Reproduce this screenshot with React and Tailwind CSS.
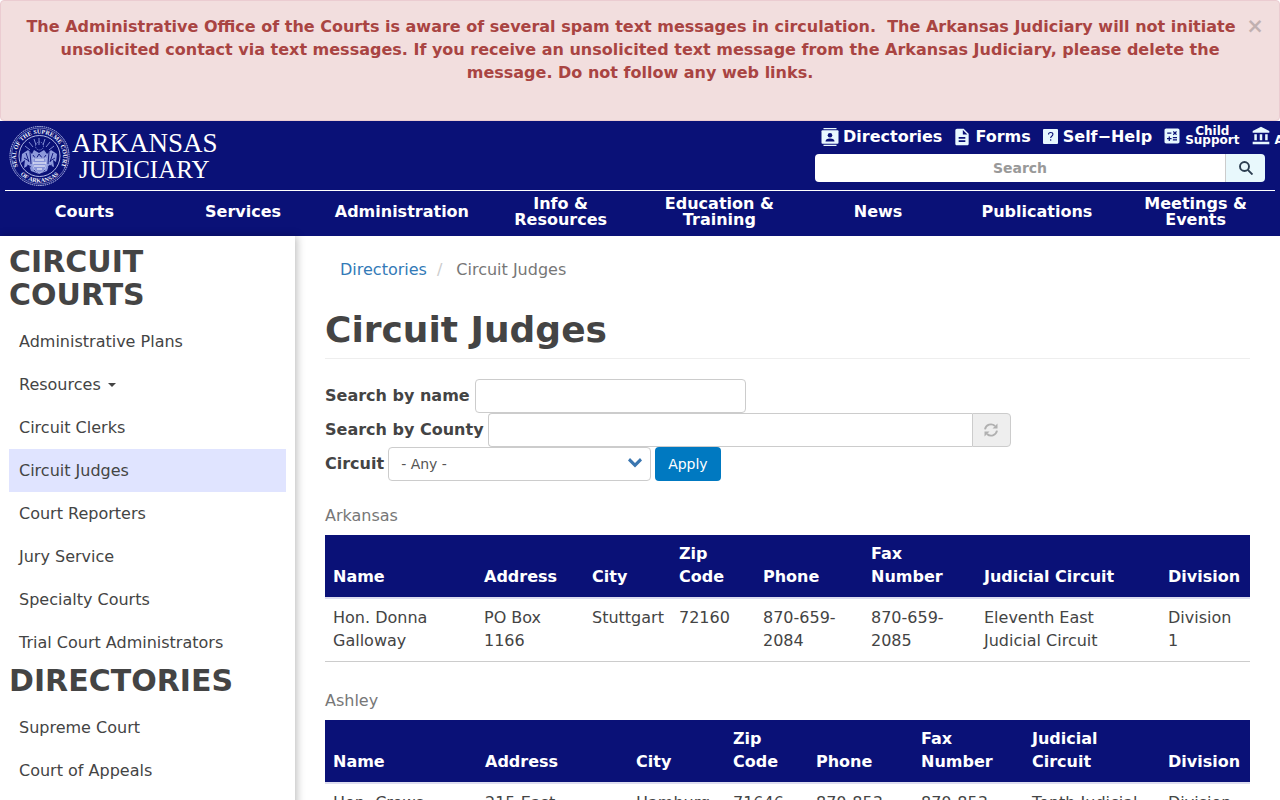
import React, { useState } from "react";
import { MdAccountBalance, MdCalculate, MdDescription } from "react-icons/md";

const mainMenu = [
  "Courts",
  "Services",
  "Administration",
  "Info & Resources",
  "Education & Training",
  "News",
  "Publications",
  "Meetings & Events",
];

const courtLinks = [
  "Administrative Plans",
  "Resources",
  "Circuit Clerks",
  "Circuit Judges",
  "Court Reporters",
  "Jury Service",
  "Specialty Courts",
  "Trial Court Administrators",
];

const directoryLinks = ["Supreme Court", "Court of Appeals"];

const columns = [
  "Name",
  "Address",
  "City",
  "Zip Code",
  "Phone",
  "Fax Number",
  "Judicial Circuit",
  "Division",
];

const counties = [
  {
    name: "Arkansas",
    widths: [
      "w-[151px]",
      "w-[108px]",
      "w-[87px]",
      "w-[84px]",
      "w-[108px]",
      "w-[113px]",
      "w-[184px]",
      "w-[90px]",
    ],
    judges: [
      [
        "Hon. Donna Galloway",
        "PO Box 1166",
        "Stuttgart",
        "72160",
        "870-659-2084",
        "870-659-2085",
        "Eleventh East Judicial Circuit",
        "Division 1",
      ],
    ],
  },
  {
    name: "Ashley",
    widths: [
      "w-[152px]",
      "w-[151px]",
      "w-[97px]",
      "w-[83px]",
      "w-[105px]",
      "w-[111px]",
      "w-[136px]",
      "w-[90px]",
    ],
    judges: [
      [
        "Hon. Crews Puryear",
        "215 East Jefferson",
        "Hamburg",
        "71646",
        "870-853-2030",
        "870-853-2033",
        "Tenth Judicial Circuit",
        "Division 1",
      ],
    ],
  },
];

const Alert = ({ onClose }) => (
  <div
    role="alert"
    className="min-h-[121px] rounded border border-[#ebccd1] bg-[#f2dede] px-[15px] pt-3.5 text-center font-bold leading-[23px] text-[#a94442]"
  >
    <button
      onClick={onClose}
      aria-label="Close"
      className="float-right w-[18px] text-[21px] leading-[23px] text-black opacity-20"
    >
      ×
    </button>
    The Administrative Office of the Courts is aware of several spam text
    messages in circulation.&nbsp; The Arkansas Judiciary will not initiate
    unsolicited contact via text messages. If you receive an unsolicited text
    message from the Arkansas Judiciary, please delete the message. Do not
    follow any web links.
  </div>
);

const Logo = () => (
  <svg
    width="210"
    height="64"
    viewBox="0 0 210 64"
    role="img"
    aria-label="Arkansas Judiciary"
  >
    <defs>
      <path id="sealTop" d="M9.200 42A23.500 23.500 0 1 1 51.800 42" />
      <path id="sealBottom" d="M11 49A26.500 26.500 0 0 0 50 49" />
    </defs>
    <g fill="none" stroke="#c3cbf2">
      <circle cx="30.500" cy="31" r="29.500" strokeDasharray="1.500 0.700" />
      <circle cx="30.500" cy="31" r="28" strokeWidth="0.500" />
      <circle cx="30.500" cy="31" r="20.500" strokeWidth="0.900" />
    </g>
    <g fill="#f4f6ff" fontFamily="Liberation Serif, serif" fontWeight="700">
      <text fontSize="6">
        <textPath href="#sealTop" startOffset="50%" textAnchor="middle">
          SEAL OF THE SUPREME COURT
        </textPath>
      </text>
      <text fontSize="6">
        <textPath href="#sealBottom" startOffset="50%" textAnchor="middle">
          OF ARKANSAS
        </textPath>
      </text>
    </g>
    {/* rays and stars over the shield */}
    <g stroke="#8f9ade" strokeWidth="0.900" fill="none">
      <path d="M30 13v7M25 14l2 6M36 14l-2 6M20 17l4 5M41 17l-4 5M16 21l5 4M45 21l-5 4" />
      <circle cx="30.500" cy="21" r="4" strokeDasharray="1 1" />
    </g>
    <path
      d="M13 29l6-4 4 4 2-4 5 3 5-3 3 4 4-4 6 4-1 8-3-2 1 7-5-2-2 6-8 3-8-3-2-6-5 3 1-8-4 3z"
      fill="#8d99db"
    />
    <path
      d="M17 28l3 9M21 27l1 12M40 27l-1 12M44 28l-3 9M24 30l3 4 3-5 4 5 3-4M15 33l5 3M46 33l-5 3M25 45l5 3 6-3M18 40l4 2M43 40l-4 2"
      stroke="#0a1177"
      strokeWidth="0.900"
      fill="none"
    />
    <path
      d="M24 33h13v8q-1 5-6.500 7q-5.500-2-6.500-7z"
      fill="#8793d8"
      stroke="#c9d0f4"
      strokeWidth="0.700"
    />
    <path
      d="M26 35h9M24 38h13M25 41h11M28 44h5"
      stroke="#fff"
      strokeWidth="1.100"
    />
    <g fill="#fff" fontFamily="Liberation Serif, serif" fontWeight="400">
      <text x="63" y="27" fontSize="27">
        ARKANSAS
      </text>
      <text x="70" y="53" fontSize="25">
        JUDICIARY
      </text>
    </g>
  </svg>
);

const DirectoryIcon = () => (
  <svg width="18" height="18" viewBox="0 0 18 18" aria-hidden="true">
    <path d="M2.500 0h13v1.300h-13zM2.500 16.700h13V18h-13z" fill="#e8f8ff" />
    <rect x="0.500" y="2.300" width="17" height="13.400" rx="1" fill="#e8f8ff" />
    <circle cx="9" cy="7.300" r="2.300" fill="#0a1177" />
    <path d="M4.500 13.500q0-3 4.500-3t4.500 3z" fill="#0a1177" />
  </svg>
);

const HelpIcon = () => (
  <svg width="15" height="15" viewBox="0 0 15 15" aria-hidden="true">
    <rect width="15" height="15" rx="1" fill="#e8f8ff" />
    <path
      d="M5.500 5.500q0-2 2.200-2t2.200 1.800q0 1-1.200 1.900t-1 1.800M7.700 10.300v1.400"
      fill="none"
      stroke="#0a1177"
      strokeWidth="1.100"
    />
  </svg>
);

const SearchIcon = () => (
  <svg
    width="14"
    height="14"
    viewBox="0 0 14 14"
    fill="none"
    stroke="currentColor"
    strokeWidth="1.900"
    aria-hidden="true"
  >
    <circle cx="5.500" cy="5.500" r="4.500" />
    <path d="M8.800 8.800l4.700 4.700" />
  </svg>
);

const RefreshIcon = () => (
  <svg
    width="14"
    height="14"
    viewBox="0 0 14 14"
    fill="none"
    stroke="#b0b0b0"
    strokeWidth="1.900"
    aria-hidden="true"
  >
    <path d="M1 6.300A6 6 0 0 1 11 3M13 7.700A6 6 0 0 1 3 11" />
    <path d="M13.500 0.500v5h-5zM0.500 13.500v-5h5z" fill="#b0b0b0" stroke="none" />
  </svg>
);

const Header = () => (
  <header className="overflow-hidden bg-[#0a1177] px-[5px] font-bold text-white">
    <div className="flex h-[70px] items-start justify-between border-b border-white">
      <a href="#home" className="ml-1 mt-1 shrink-0">
        <Logo />
      </a>
      <div className="w-[460px] shrink-0 pr-2.5">
        <nav className="flex h-[31px] items-center whitespace-nowrap pl-1.5">
          <a href="#directories" className="mr-2.5 flex items-center gap-1">
            <DirectoryIcon />
            Directories
          </a>
          <a href="#forms" className="mr-3 flex items-center gap-[3px]">
            <MdDescription className="size-5 text-[#e8f8ff]" />
            Forms
          </a>
          <a href="#self-help" className="mr-2.5 flex items-center gap-[5px]">
            <HelpIcon />
            Self−Help
          </a>
          <a
            href="#child-support"
            className="mr-3 flex items-center gap-[3px]"
          >
            <MdCalculate className="mb-0.5 size-5 text-[#e8f8ff]" />
            <span className="pb-0.5 text-center text-xs leading-[9px]">
              Child
              <br />
              Support
            </span>
          </a>
          <a href="#aoc" className="flex items-center gap-[3px]">
            <MdAccountBalance className="mb-0.5 size-5 text-[#e8f8ff]" />
            <span className="pt-2 text-xs leading-[9px]">AOC</span>
          </a>
        </nav>
        <form className="mt-0.5 flex h-7" onSubmit={(e) => e.preventDefault()}>
          <input
            type="text"
            aria-label="Search"
            placeholder="Search"
            className="min-w-0 grow rounded-l bg-white px-3 text-center text-sm text-[#444] placeholder:text-[#999]"
          />
          <button
            aria-label="Submit search"
            className="flex w-10 items-center justify-center rounded-r border-l border-[#ccc] bg-[#e8f8fc] text-[#2c3e50]"
          >
            <SearchIcon />
          </button>
        </form>
      </div>
    </div>
    <nav className="grid h-[45px] grid-cols-8 items-center pb-1 text-center leading-4">
      {mainMenu.map((item) => (
        <a key={item} href="#menu" className="px-3">
          {item}
        </a>
      ))}
    </nav>
  </header>
);

const SideMenu = ({ title, links }) => (
  <>
    <h2 className="text-3xl font-bold leading-[33px]">{title}</h2>
    <ul className="pt-[9px]">
      {links.map((link) => (
        <li key={link}>
          <a
            href="#page"
            className={`flex h-[43px] items-center px-2.5 ${
              link === "Circuit Judges" ? "bg-[#e0e4ff]" : ""
            }`}
          >
            {link}
            {link === "Resources" && (
              <span className="ml-[7px] border-x-4 border-t-4 border-x-transparent border-t-[#444]" />
            )}
          </a>
        </li>
      ))}
    </ul>
  </>
);

const CountyTable = ({ county }) => (
  <table className="mb-[19px] w-full table-fixed border-collapse text-left">
    <caption className="py-2 text-left text-[#777]">{county.name}</caption>
    <colgroup>
      {county.widths.map((width, index) => (
        <col key={index} className={width} />
      ))}
    </colgroup>
    <thead className="bg-[#0a1177] text-white">
      <tr>
        {columns.map((column) => (
          <th
            key={column}
            className="border-b-2 border-[#ddddef] px-2 pb-[9px] pt-[7px] align-bottom"
          >
            {column}
          </th>
        ))}
      </tr>
    </thead>
    <tbody>
      {county.judges.map((judge) => (
        <tr key={judge[0]}>
          {judge.map((value, index) => (
            <td
              key={index}
              className="border-b border-[#ccc] px-2 pb-[9px] pt-[7px] align-top"
            >
              {value}
            </td>
          ))}
        </tr>
      ))}
    </tbody>
  </table>
);

const SearchForm = () => (
  <form onSubmit={(e) => e.preventDefault()}>
    <div className="flex items-center gap-[5px]">
      <label htmlFor="name" className="pb-0.5 font-bold">
        Search by name
      </label>
      <input
        id="name"
        type="text"
        className="h-[34px] w-[271px] rounded border border-[#ccc] px-3 text-sm"
      />
    </div>
    <div className="flex items-center gap-1">
      <label htmlFor="county" className="pb-0.5 font-bold">
        Search by County
      </label>
      <div className="flex">
        <input
          id="county"
          type="text"
          className="h-[34px] w-[484px] rounded-l border border-r-0 border-[#ccc] px-3 text-sm"
        />
        <span className="flex w-[39px] items-center justify-center rounded-r border border-[#ccc] bg-[#eee]">
          <RefreshIcon />
        </span>
      </div>
    </div>
    <div className="flex items-center gap-1">
      <label htmlFor="circuit" className="pb-0.5 font-bold">
        Circuit
      </label>
      <div className="relative">
        <select
          id="circuit"
          className="h-[34px] w-[263px] appearance-none rounded border border-[#ccc] bg-white px-3 text-sm text-[#555]"
        >
          <option>- Any -</option>
          <option>Tenth Judicial Circuit</option>
          <option>Eleventh East Judicial Circuit</option>
        </select>
        <svg
          width="16"
          height="10"
          viewBox="0 0 14 10"
          className="pointer-events-none absolute right-2 top-[11px]"
          aria-hidden="true"
        >
          <path d="M2 0l5 5 5-5 2 2.500-7 7-7-7z" fill="#3a76b0" />
        </svg>
      </div>
      <button className="h-[34px] rounded bg-[#0079c1] px-[13px] text-sm text-white">
        Apply
      </button>
    </div>
  </form>
);

const App = () => {
  const [showAlert, setShowAlert] = useState(true);

  return (
    <div className="overflow-hidden bg-white font-['DejaVu_Sans',sans-serif] text-base leading-[23px] text-[#444]">
      {showAlert && <Alert onClose={() => setShowAlert(false)} />}
      <Header />
      <div className="flex">
        <aside className="w-[295px] shrink-0 px-[9px] pt-[9px] shadow-[2px_0_8px_rgba(0,0,0,0.25)]">
          <SideMenu title="CIRCUIT COURTS" links={courtLinks} />
          <SideMenu title="DIRECTORIES" links={directoryLinks} />
        </aside>
        <main className="min-w-0 grow px-[30px] pt-[22px]">
          <ol className="flex px-[15px]">
            <li>
              <a href="#directories" className="text-[#337ab7]">
                Directories
              </a>
            </li>
            <li className="px-2.5 text-[#ccc]">/</li>
            <li className="pl-1 text-[#777]">Circuit Judges</li>
          </ol>
          <h1 className="mb-5 mt-[29px] border-b border-[#eee] pb-2 text-4xl font-bold leading-10">
            Circuit Judges
          </h1>
          <SearchForm />
          <div className="pt-[15px]">
            {counties.map((county) => (
              <CountyTable key={county.name} county={county} />
            ))}
          </div>
        </main>
      </div>
    </div>
  );
};

export default App;
